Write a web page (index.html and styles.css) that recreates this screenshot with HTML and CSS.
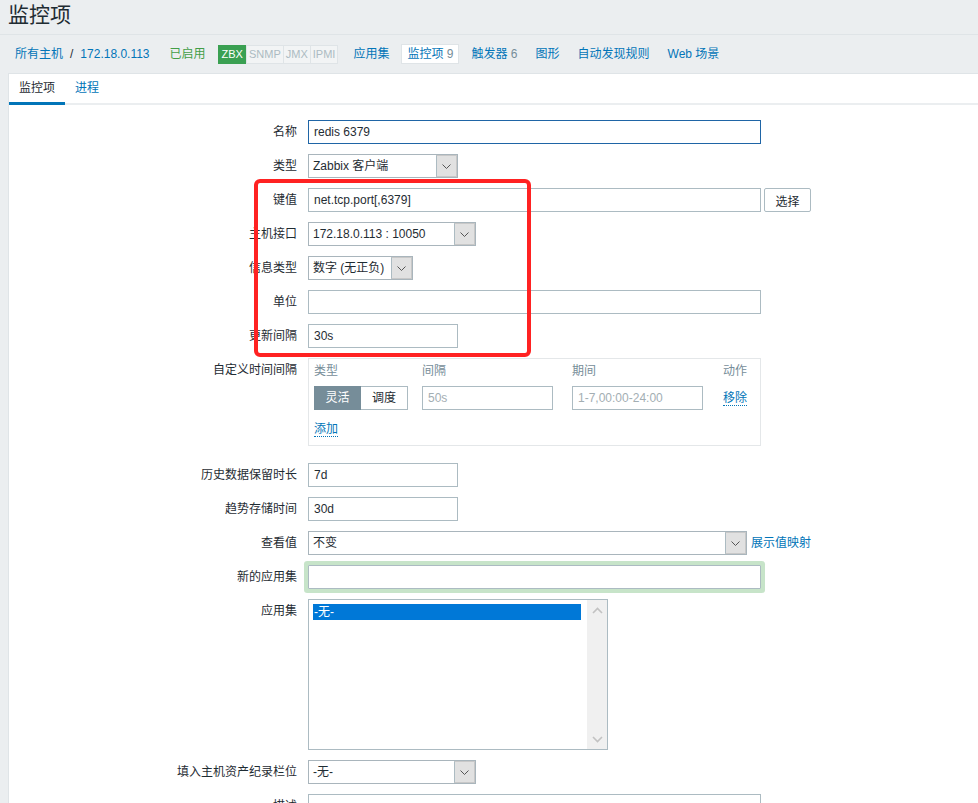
FILE: index.html
```html
<!DOCTYPE html>
<html lang="zh-CN">
<head>
<meta charset="utf-8">
<title>监控项</title>
<link rel="stylesheet" href="styles.css">
</head>
<body>
<header class="page-header"><h1 class="page-title">监控项</h1></header>
<nav class="host-nav">
  <a class="link">所有主机</a>
  <span class="crumb-sep">/</span>
  <a class="link">172.18.0.113</a>
  <span class="status-on">已启用</span>
  <span class="avail"><span class="avail-tag zbx">ZBX</span><span class="avail-tag">SNMP</span><span class="avail-tag">JMX</span><span class="avail-tag">IPMI</span></span>
  <ul class="nav-list">
    <li class="nav-item"><a class="link">应用集</a></li>
    <li class="nav-item selected"><a class="link">监控项</a> <span class="count">9</span></li>
    <li class="nav-item"><a class="link">触发器</a> <span class="count">6</span></li>
    <li class="nav-item"><a class="link">图形</a></li>
    <li class="nav-item"><a class="link">自动发现规则</a></li>
    <li class="nav-item"><a class="link">Web 场景</a></li>
  </ul>
</nav>
<main class="panel">
  <div class="tabs">
    <span class="tab active">监控项</span>
    <span class="tab"><a class="link">进程</a></span>
  </div>
  <form class="form">
    <div class="row"><label class="lbl">名称</label><div class="field"><input class="input w453 focused" value="redis 6379"></div></div>
    <div class="row"><label class="lbl">类型</label><div class="field"><div class="select w150"><span class="select-val">Zabbix 客户端</span><span class="select-btn"><svg width="9" height="5" viewBox="0 0 9 5"><polyline points="0.5,0.5 4.5,4.5 8.5,0.5" fill="none" stroke="#555" stroke-width="1"/></svg></span></div></div></div>
    <div class="row"><label class="lbl">键值</label><div class="field"><input class="input w453" value="net.tcp.port[,6379]"><button type="button" class="btn">选择</button></div></div>
    <div class="row"><label class="lbl">主机接口</label><div class="field"><div class="select w168"><span class="select-val">172.18.0.113 : 10050</span><span class="select-btn"><svg width="9" height="5" viewBox="0 0 9 5"><polyline points="0.5,0.5 4.5,4.5 8.5,0.5" fill="none" stroke="#555" stroke-width="1"/></svg></span></div></div></div>
    <div class="row"><label class="lbl">信息类型</label><div class="field"><div class="select w105"><span class="select-val">数字 (无正负)</span><span class="select-btn"><svg width="9" height="5" viewBox="0 0 9 5"><polyline points="0.5,0.5 4.5,4.5 8.5,0.5" fill="none" stroke="#555" stroke-width="1"/></svg></span></div></div></div>
    <div class="row"><label class="lbl">单位</label><div class="field"><input class="input w453" value=""></div></div>
    <div class="row"><label class="lbl">更新间隔</label><div class="field"><input class="input w150" value="30s"></div></div>
    <div class="row row-gap"><label class="lbl">自定义时间间隔</label>
      <div class="field">
        <div class="intervals">
          <div class="iv-grid">
            <span class="iv-head">类型</span><span class="iv-head">间隔</span><span class="iv-head">期间</span><span class="iv-head">动作</span>
            <span class="seg"><span class="seg-btn on">灵活</span><span class="seg-btn">调度</span></span>
            <span><input class="input w131" placeholder="50s"></span>
            <span><input class="input w131" placeholder="1-7,00:00-24:00"></span>
            <span class="iv-action"><a class="link dotted">移除</a></span>
          </div>
          <div class="iv-add"><a class="link dotted">添加</a></div>
        </div>
      </div>
    </div>
    <div class="row"><label class="lbl">历史数据保留时长</label><div class="field"><input class="input w150" value="7d"></div></div>
    <div class="row"><label class="lbl">趋势存储时间</label><div class="field"><input class="input w150" value="30d"></div></div>
    <div class="row"><label class="lbl">查看值</label><div class="field"><div class="select w439"><span class="select-val">不变</span><span class="select-btn"><svg width="9" height="5" viewBox="0 0 9 5"><polyline points="0.5,0.5 4.5,4.5 8.5,0.5" fill="none" stroke="#555" stroke-width="1"/></svg></span></div><a class="link map-link">展示值映射</a></div></div>
    <div class="row"><label class="lbl">新的应用集</label><div class="field"><input class="input w453 glow" value=""></div></div>
    <div class="row"><label class="lbl">应用集</label><div class="field">
      <div class="listbox">
        <div class="lb-options"><div class="lb-opt sel">-无-</div></div>
        <div class="lb-scroll">
          <svg width="11" height="7" viewBox="0 0 11 7"><polyline points="1,6 5.5,1.5 10,6" fill="none" stroke="#c2c2c2" stroke-width="1.6"/></svg>
          <svg width="11" height="7" viewBox="0 0 11 7"><polyline points="1,1 5.5,5.5 10,1" fill="none" stroke="#c2c2c2" stroke-width="1.6"/></svg>
        </div>
      </div>
    </div></div>
    <div class="row"><label class="lbl">填入主机资产纪录栏位</label><div class="field"><div class="select w168"><span class="select-val">-无-</span><span class="select-btn"><svg width="9" height="5" viewBox="0 0 9 5"><polyline points="0.5,0.5 4.5,4.5 8.5,0.5" fill="none" stroke="#555" stroke-width="1"/></svg></span></div></div></div>
    <div class="row"><label class="lbl">描述</label><div class="field"><textarea class="textarea w453"></textarea></div></div>
  </form>
</main>
<div class="annotation"></div>
</body>
</html>
```

FILE: styles.css
```css
* { box-sizing: border-box; }
html, body { margin: 0; padding: 0; overflow: hidden; }
body {
  width: 978px;
  height: 803px;
  background: #ebeef0;
  font-family: "Liberation Sans", "Noto Sans CJK SC", sans-serif;
  font-size: 12px;
  line-height: 14px;
  color: #1f2c33;
}
.link { color: #0275b8; text-decoration: none; }
.page-header { height: 35px; border-bottom: 1px solid #dfe4e7; padding-left: 8px; }
.page-title { margin: 0; font-size: 21px; font-weight: normal; line-height: 30px; color: #1f2c33; }

.host-nav { height: 38px; display: flex; align-items: center; padding-left: 15px; white-space: nowrap; }
.crumb-sep { margin: 0 7px; color: #1f2c33; }
.status-on { color: #429e47; margin-left: 20px; }
.avail { display: flex; margin-left: 12px; margin-right: 9px; }
.avail-tag {
  font-size: 11px; line-height: 17px; padding: 0 2px;
  border: 1px solid #dfe4e7; color: #acbbc2; background: #f2f4f5; margin-left: -1px;
}
.avail-tag.zbx { background: #3aa052; border-color: #3aa052; color: #fff; margin-left: 0; padding: 0 3px; }
.nav-list { list-style: none; margin: 0; padding: 0; display: flex; gap: 6px; }
.nav-item { padding: 0 5px; border: 1px solid transparent; line-height: 18px; }
.nav-item.selected { background: #fff; border-color: #dfe4e7; }
.count { color: #768d99; }

.panel { margin-left: 8px; background: #fff; border: 1px solid #dfe4e7; border-right: 0; border-bottom: 0; height: 740px; }
.tabs { display: flex; border-bottom: 2px solid #ebeef0; }
.tab { padding: 1px 10px 0; line-height: 27px; border-bottom: 3px solid transparent; margin-bottom: -2px; }
.tab.active { border-bottom-color: #0275b8; color: #1f2c33; }

.form { padding-top: 10px; }
.row { display: grid; grid-template-columns: 288px 1fr; column-gap: 11px; padding: 5px 0; }
.row-gap { margin-bottom: 7px; }
.lbl { text-align: right; line-height: 24px; white-space: nowrap; }
.field { display: flex; align-items: flex-start; }

.input, .textarea {
  height: 24px; border: 1px solid #acbbc2; padding: 0 5px; margin: 0;
  font-family: inherit; font-size: 12px; color: #1f2c33; background: #fff; outline: none;
  border-radius: 0;
}
.input::placeholder { color: #a3aeb3; }
.textarea { height: 60px; resize: none; }
.focused { border-color: #1f65a6; }
.glow { box-shadow: 0 0 0 4px #c7e4c9; border-radius: 1px; }
.w453 { width: 453px; }
.w439 { width: 439px; }
.w168 { width: 168px; }
.w150 { width: 150px; }
.w131 { width: 131px; }
.w105 { width: 105px; }

.btn {
  margin: 0 0 0 3px; height: 24px; width: 47px; padding: 0;
  border: 1px solid #acbbc2; background: #fff; color: #1f2c33;
  font-family: inherit; font-size: 12px; border-radius: 2px;
}

.select { display: flex; height: 24px; border: 1px solid #a9b5bc; background: #fff; }
.select-val { flex: 1; padding-left: 4px; line-height: 22px; white-space: nowrap; overflow: hidden; }
.select-btn {
  width: 21px; background: #e1e1e1; border: 1px solid #c8c8c8; border-left-color: #acbbc2;
  display: flex; align-items: center; justify-content: center;
}
.map-link { margin-left: 4px; line-height: 24px; }

.intervals { width: 453px; border: 1px solid #e4e7e9; padding: 5px 5px 9px; }
.iv-grid { display: grid; grid-template-columns: 108px 150px 151px auto; align-items: center; }
.iv-head { color: #768d99; line-height: 14px; margin-bottom: 8px; }
.seg { display: flex; }
.seg-btn { width: 47px; height: 24px; border: 1px solid #acbbc2; text-align: center; line-height: 22px; }
.seg-btn + .seg-btn { border-left: 0; }
.seg-btn.on { background: #768d99; border-color: #768d99; color: #fff; }
.seg-btn.on + .seg-btn { border-left: 0; }
.iv-grid > span:nth-child(6), .iv-grid > span:nth-child(7) { display: flex; }
.dotted { border-bottom: 1px dotted #0275b8; }
.iv-add { margin-top: 12px; line-height: 14px; }

.listbox { width: 300px; height: 151px; border: 1px solid #acbbc2; display: flex; background: #fff; }
.lb-options { flex: 1; padding: 4px 6px 4px 4px; }
.lb-opt { line-height: 16px; padding-left: 1px; }
.lb-opt.sel { background: #0078d7; color: #fff; }
.lb-scroll {
  width: 20px; background: #f0f0f0; display: flex; flex-direction: column;
  justify-content: space-between; align-items: center; padding: 7px 0 6px;
}

.annotation {
  position: absolute; left: 254px; top: 179px; width: 277px; height: 178px;
  border: 4px solid #ff2222; border-radius: 6px; pointer-events: none;
}
```
